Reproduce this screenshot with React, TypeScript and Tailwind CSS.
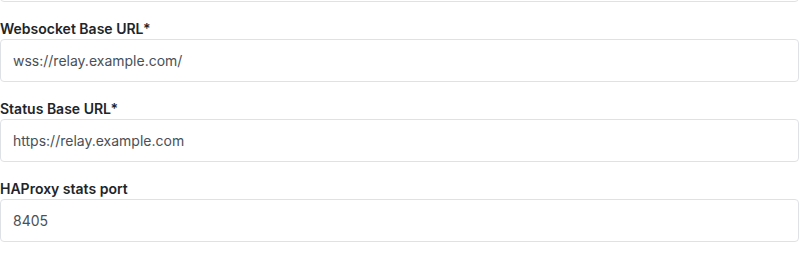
import React from "react";

const inputCls =
  "block w-full h-[43px] rounded-[4px] border border-[#dee2e6] bg-white px-3 text-[14px] text-[#495057] outline-none";

function Field({ label, value, required }: { label: string; value: string; required?: boolean }) {
  return (
    <div className="mt-[17px]">
      <label className="block text-[14px] leading-5 font-semibold text-[#212529]">
        {label}
        {required ? <span>*</span> : null}
      </label>
      <input className={inputCls} defaultValue={value} readOnly />
    </div>
  );
}

export default function App() {
  return (
    <div
      className="w-[800px] h-[257px] overflow-hidden bg-white pr-[1px]"
      style={{ fontFamily: "Inter, 'Noto Sans', sans-serif" }}
    >
      <div className="-mt-[41px]">
        <input className={inputCls} defaultValue="" readOnly />
      </div>
      <Field label="Websocket Base URL" value="wss://relay.example.com/" required />
      <Field label="Status Base URL" value="https://relay.example.com" required />
      <Field label="HAProxy stats port" value="8405" />
    </div>
  );
}
